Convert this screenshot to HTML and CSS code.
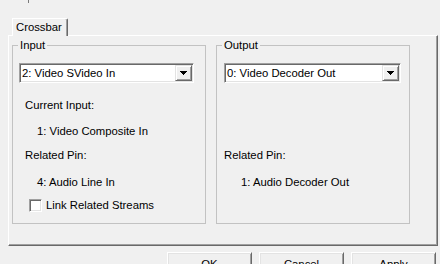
FILE: index.html
```html
<!DOCTYPE html>
<html lang="en">
<head>
    <meta charset="UTF-8">
    <title>Crossbar Properties</title>
    <link rel="stylesheet" href="styles.css">
</head>
<body>
    <div class="titlebar"><span class="tick"></span></div>
    <div class="tabs">
        <div class="tab">Crossbar</div>
    </div>
    <div class="panel">
        <fieldset class="group group-input">
            <legend>Input</legend>
            <div class="combo">
                <span class="combo-text">2: Video SVideo In</span>
                <span class="combo-btn">
                    <svg width="7" height="4" viewBox="0 0 7 4"><polygon points="0,0 7,0 3.5,4" fill="#000"/></svg>
                </span>
            </div>
            <div class="label first">Current Input:</div>
            <div class="value">1: Video Composite In</div>
            <div class="label second">Related Pin:</div>
            <div class="value pin">4: Audio Line In</div>
            <label class="check"><span class="box"></span>Link Related Streams</label>
        </fieldset>
        <fieldset class="group group-output">
            <legend>Output</legend>
            <div class="combo">
                <span class="combo-text">0: Video Decoder Out</span>
                <span class="combo-btn">
                    <svg width="7" height="4" viewBox="0 0 7 4"><polygon points="0,0 7,0 3.5,4" fill="#000"/></svg>
                </span>
            </div>
            <div class="label related">Related Pin:</div>
            <div class="value pin">1: Audio Decoder Out</div>
        </fieldset>
    </div>
    <div class="buttons">
        <button class="btn">OK</button>
        <button class="btn">Cancel</button>
        <button class="btn">Apply</button>
    </div>
</body>
</html>
```

FILE: styles.css
```css
body {
    margin: 0;
    width: 440px;
    height: 264px;
    overflow: hidden;
    background: #f0f0f0;
    font-family: "Liberation Sans", Arial, sans-serif;
    font-size: 11.3px;
    color: #000;
}
.titlebar {
    height: 18px;
}
.tick {
    display: block;
    width: 1px;
    height: 3px;
    margin-left: 28px;
    background: #7a7a7a;
}
.tabs {
    height: 17px;
    padding-left: 12px;
}
.tab {
    position: relative;
    z-index: 1;
    box-sizing: border-box;
    width: 56px;
    height: 18px;
    padding: 2px 0 0 3px;
    line-height: 13px;
    background: #f0f0f0;
    border-top: 1px solid #fff;
    border-left: 1px solid #fff;
    border-right: 1px solid #696969;
    box-shadow: inset -1px 0 0 #a0a0a0;
    border-top-right-radius: 2px;
}
.panel {
    box-sizing: border-box;
    display: flex;
    gap: 10px;
    width: 430px;
    height: 211px;
    margin-left: 8px;
    padding: 3px 0 0 3px;
    border-top: 1px solid #fff;
    border-left: 1px solid #fff;
    border-right: 1px solid #696969;
    border-bottom: 1px solid #696969;
    box-shadow: inset -1px -1px 0 #a0a0a0;
}
.group {
    box-sizing: border-box;
    width: 194px;
    height: 185px;
    margin: 0;
    padding: 0;
    border: 1px solid #c2c2c2;
    min-width: 0;
}
.group legend {
    margin-left: 5px;
    padding: 0 2px;
    line-height: 12px;
}
.combo {
    box-sizing: border-box;
    display: flex;
    height: 20px;
    margin-top: 12px;
    background: #fff;
    border: 1px solid;
    border-color: #a0a0a0 #fff #fff #a0a0a0;
    box-shadow: inset 1px 1px 0 #696969, inset -1px -1px 0 #e3e3e3;
}
.group-input .combo {
    width: 175px;
    margin-left: 6px;
}
.group-output .combo {
    width: 177px;
    margin-left: 7px;
}
.combo-text {
    flex: 1;
    padding: 1px 0 0 2px;
    line-height: 17px;
}
.combo-btn {
    box-sizing: border-box;
    display: flex;
    align-items: center;
    justify-content: center;
    width: 17px;
    height: 16px;
    margin: 1px 1px 0 0;
    background: #f0f0f0;
    border: 1px solid;
    border-color: #e3e3e3 #696969 #696969 #e3e3e3;
    box-shadow: inset 1px 1px 0 #fff, inset -1px -1px 0 #a0a0a0;
}
.combo-btn svg {
    shape-rendering: crispEdges;
}
.label, .value, .check {
    line-height: 13px;
}
.group-input .label {
    padding-left: 12px;
}
.group-output .label {
    padding-left: 7px;
}
.value {
    padding-left: 24px;
}
.label.first {
    margin-top: 16px;
}
.label.first + .value {
    margin-top: 13px;
}
.label.second {
    margin-top: 11px;
}
.label.related {
    margin-top: 66px;
}
.value.pin {
    margin-top: 14px;
}
.check {
    display: flex;
    align-items: center;
    gap: 4px;
    margin-top: 10px;
    padding-left: 16px;
}
.box {
    box-sizing: border-box;
    width: 13px;
    height: 13px;
    background: #fff;
    border: 1px solid;
    border-color: #a0a0a0 #fff #fff #a0a0a0;
    box-shadow: inset 1px 1px 0 #696969, inset -1px -1px 0 #e3e3e3;
}
.buttons {
    display: flex;
    justify-content: flex-end;
    gap: 7px;
    padding: 6px 4px 0 0;
}
.btn {
    box-sizing: border-box;
    width: 85px;
    height: 23px;
    padding: 0;
    font-family: "Liberation Sans", Arial, sans-serif;
    font-size: 11.3px;
    color: #000;
    background: #f0f0f0;
    border: 1px solid;
    border-color: #fff #696969 #696969 #fff;
    box-shadow: inset 1px 1px 0 #e3e3e3, inset -1px -1px 0 #a0a0a0;
}
```
